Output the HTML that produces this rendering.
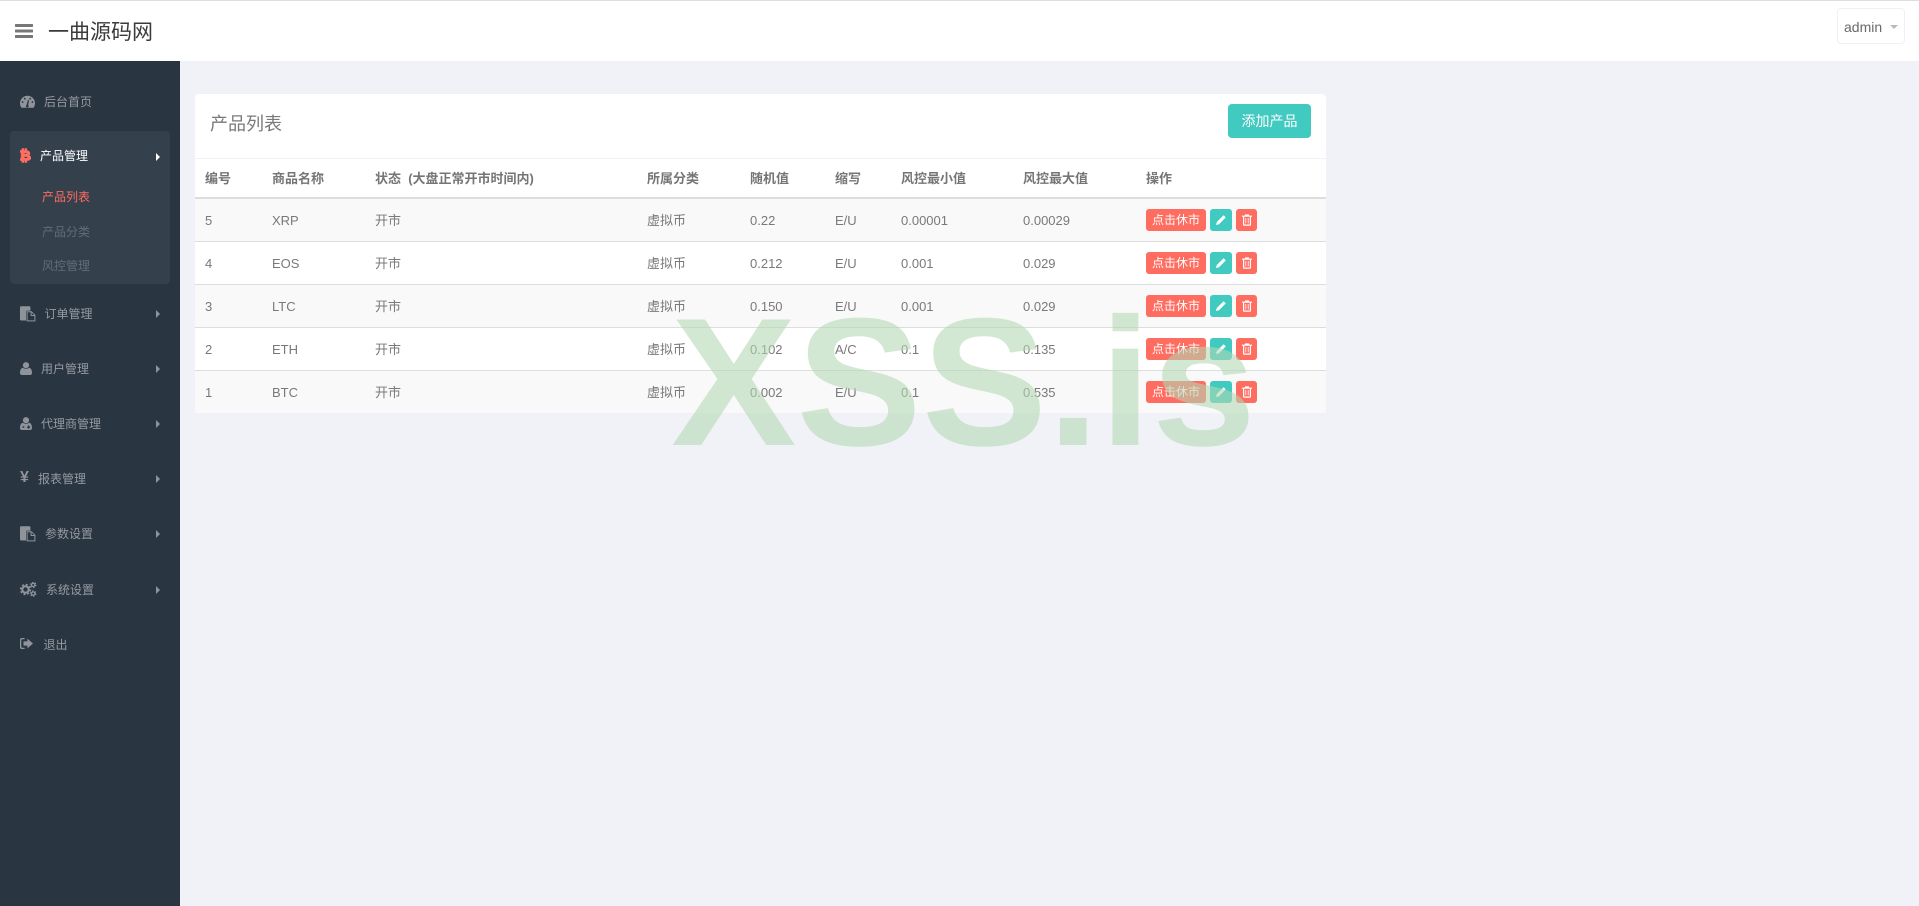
<!DOCTYPE html>
<html lang="zh-CN">
<head>
<meta charset="utf-8">
<title>一曲源码网</title>
<style>
*{box-sizing:border-box}
html,body{margin:0;padding:0;width:1919px;height:906px;overflow:hidden;background:#f1f2f7;font-family:"Liberation Sans","Noto Sans CJK SC",sans-serif;font-size:13px;color:#797979}
.abs{position:absolute}
#top{left:0;top:0;width:1919px;height:61px;background:#fff;border-top:1px solid #ddd}
#brand{position:absolute;left:48px;top:17px;line-height:30px;font-size:21px;color:#3a3a3a}
#admin{position:absolute;left:1837px;top:7px;width:68px;height:36px;border:1px solid #eff0f4;border-radius:4px;font-size:14px;line-height:36px;padding-left:6px;color:#6a6a6a}
#admin i{position:absolute;left:52px;top:16px;width:0;height:0;border:4px solid transparent;border-top-color:#b4bcbc;border-bottom:0}
#side{left:0;top:61px;width:180px;height:845px;background:#2a3542}
#sub{left:10px;top:131px;width:160px;height:153px;background:#35404d;border-radius:4px}
.m{position:absolute;font-size:12px;line-height:20px;color:#969aa1;white-space:nowrap}
.c{position:absolute;left:156px;width:0;height:0;border-left:4px solid #8f949b;border-top:4px solid transparent;border-bottom:4px solid transparent}
.ic{position:absolute;fill:#8f949b}
#card{left:195px;top:94px;width:1131px;height:319px;background:#fff;border-radius:4px 4px 0 0;overflow:hidden}
#card h3{position:absolute;left:15px;top:16px;margin:0;font-size:18px;line-height:28px;font-weight:400;color:#797979}
#add{position:absolute;left:1033px;top:10px;width:83px;height:34px;background:#41cac0;border-radius:4px;color:#fff;font-size:14px;line-height:34px;text-align:center}
table{position:absolute;left:0;top:64px;width:1131px;table-layout:fixed;border-collapse:separate;border-spacing:0}
th,td{padding:0 0 0 10px;text-align:left;font-size:13px;color:#797979;white-space:nowrap;vertical-align:middle}
th{height:41px;padding-bottom:2px;border-top:1px solid #f1f2f7;border-bottom:2px solid #ddd;font-weight:700;color:#757575}
td{height:43px;border-bottom:1px solid #ddd}
td.z{padding-bottom:2px}
tr.s td{background:#f9f9f9}
tr.l td{border-bottom:0;height:42px}
.b{display:inline-block;vertical-align:top;height:22px;border-radius:3px;background:#ff6c60;color:#fff;font-size:12px;line-height:22px;text-align:center;margin-right:4px;position:relative}
.w{width:60px}.e{width:22px;background:#41cac0}.d{width:21px}
.b svg{position:absolute;left:5px;top:5px;width:12px;height:12px;fill:#fff}
</style>
</head>
<body>
<div class="abs" id="top">
  <svg class="abs" style="left:15px;top:23px" width="18" height="14" viewBox="0 0 18 14" fill="#777"><rect y="0" width="18" height="3" rx=".6"/><rect y="5.5" width="18" height="3" rx=".6"/><rect y="11" width="18" height="3" rx=".6"/></svg>
  <div id="brand">一曲源码网</div>
  <div id="admin">admin<i></i></div>
</div>

<div class="abs" id="side"></div>
<div class="abs" id="sub"></div>

<!-- dashboard -->
<svg class="ic" style="left:20px;top:95px" width="15" height="13" viewBox="0 0 15 13"><path fill-rule="evenodd" d="M1.5 12.8A7.5 7.5 0 1 1 13.5 12.8ZM2.6 6.2a.9.9 0 1 0 .01 0ZM4.8 2.8a.9.9 0 1 0 .01 0ZM10.2 2.8a.9.9 0 1 0 .01 0ZM12.4 6.2a.9.9 0 1 0 .01 0ZM6.6 10a1.3 1.3 0 1 0 1.6 .2L9 5 8 4.8Z"/></svg>
<div class="m" style="left:44px;top:92px">后台首页</div>

<!-- bitcoin -->
<svg class="abs" style="left:20px;top:148px" width="11" height="15" viewBox="0 0 11 15"><path fill="#ff6c60" stroke="#ff6c60" stroke-width=".8" fill-rule="evenodd" d="M.4 2.5H2V.6H3.7V2.5H5V.6H6.7V2.6C8.7 2.9 9.8 3.9 9.8 5.3C9.8 6.3 9.2 7 8.4 7.3C9.8 7.7 10.7 8.6 10.7 10C10.7 11.5 9.2 12.4 6.7 12.5V14.4H5V12.5H3.7V14.4H2V12.5H.4V10.8H1.2V4.2H.4ZM4.2 4.8V6.4H5.8C6.7 6.4 7.1 6.1 7.1 5.6C7.1 5.1 6.7 4.8 5.8 4.8ZM4.2 8.5V10.4H6.1C7.2 10.4 7.8 10.1 7.8 9.5C7.8 8.9 7.2 8.5 6.1 8.5Z"/></svg>
<div class="m" style="left:40px;top:146px;color:#fff">产品管理</div>
<div class="c" style="top:153px;border-left-color:#fff"></div>
<div class="m" style="left:42px;top:187px;color:#ff6c60">产品列表</div>
<div class="m" style="left:42px;top:222px;color:#626c79">产品分类</div>
<div class="m" style="left:42px;top:256px;color:#626c79">风控管理</div>

<!-- paste -->
<svg class="ic" style="left:20px;top:306px" width="16" height="16" viewBox="0 0 16 16"><path d="M0 1.5Q0 .3 1.2 .3H9.5Q10.4 .3 10.4 1.5V4.6H7.2Q6 4.6 6 5.8V14.5H1.2Q0 14.5 0 13.3Z"/><path fill-rule="evenodd" d="M6.6 5.2H11.6L15.4 9V15.4H6.6ZM7.6 6.2V14.4H14.4V10H10.6V6.2ZM11.6 6.5V9H14.1Z"/></svg>
<div class="m" style="left:44.5px;top:304px">订单管理</div>
<div class="c" style="top:310px"></div>

<!-- user -->
<svg class="ic" style="left:20px;top:362px" width="12" height="13" viewBox="0 0 12 13"><circle cx="6" cy="3.2" r="3.1"/><path d="M0 11C0 7.8 1.2 6 3 5.8C4.6 7.2 7.4 7.2 9 5.8C10.8 6 12 7.8 12 11C12 12.2 11.2 13 10 13H2C.8 13 0 12.2 0 11Z"/></svg>
<div class="m" style="left:41px;top:359px">用户管理</div>
<div class="c" style="top:365px"></div>

<!-- user-md -->
<svg class="ic" style="left:20px;top:417px" width="12" height="13" viewBox="0 0 12 13"><circle cx="6" cy="3.2" r="3.1"/><path fill-rule="evenodd" d="M0 11C0 7.8 1.2 6 3 5.8C4.6 7.2 7.4 7.2 9 5.8C10.8 6 12 7.8 12 11C12 12.2 11.2 13 10 13H2C.8 13 0 12.2 0 11ZM2.5 9.2H4.3V10.8H2.5ZM8 8.5H9.2V9.5H10.2V10.7H9.2V11.7H8V10.7H7V9.5H8Z"/></svg>
<div class="m" style="left:41px;top:414px">代理商管理</div>
<div class="c" style="top:420px"></div>

<!-- yen -->
<div class="m" style="left:20px;top:468px;font-size:16px;font-weight:700;color:#8f949b">¥</div>
<div class="m" style="left:38px;top:469px">报表管理</div>
<div class="c" style="top:475px"></div>

<!-- paste -->
<svg class="ic" style="left:20px;top:526px" width="16" height="16" viewBox="0 0 16 16"><path d="M0 1.5Q0 .3 1.2 .3H9.5Q10.4 .3 10.4 1.5V4.6H7.2Q6 4.6 6 5.8V14.5H1.2Q0 14.5 0 13.3Z"/><path fill-rule="evenodd" d="M6.6 5.2H11.6L15.4 9V15.4H6.6ZM7.6 6.2V14.4H14.4V10H10.6V6.2ZM11.6 6.5V9H14.1Z"/></svg>
<div class="m" style="left:45px;top:524px">参数设置</div>
<div class="c" style="top:530px"></div>

<!-- gears -->
<svg class="abs" style="left:20px;top:582px" width="17" height="15" viewBox="0 0 17 15" fill="none" stroke="#8f949b"><circle cx="5.5" cy="7.5" r="3.2" stroke-width="2"/><circle cx="5.5" cy="7.5" r="4.9" stroke-width="1.6" stroke-dasharray="2 1.85"/><circle cx="13.2" cy="2.9" r="1.7" stroke-width="1.3"/><circle cx="13.2" cy="2.9" r="2.8" stroke-width="1" stroke-dasharray="1.4 1.53"/><circle cx="13.2" cy="11.6" r="1.7" stroke-width="1.3"/><circle cx="13.2" cy="11.6" r="2.8" stroke-width="1" stroke-dasharray="1.4 1.53"/></svg>
<div class="m" style="left:46px;top:580px">系统设置</div>
<div class="c" style="top:586px"></div>

<!-- sign out -->
<svg class="ic" style="left:20px;top:638px" width="13" height="11" viewBox="0 0 13 11"><path d="M1.8 0H4.6V1.3H2.2Q1.3 1.3 1.3 2.2V8.8Q1.3 9.7 2.2 9.7H4.6V11H1.8Q0 11 0 9.2V1.8Q0 0 1.8 0Z"/><path d="M7.4 .6L13 5.5L7.4 10.4V7.6H3.5V3.4H7.4Z"/></svg>
<div class="m" style="left:43.5px;top:635px">退出</div>

<div class="abs" id="card">
  <h3>产品列表</h3>
  <div id="add">添加产品</div>
  <table>
    <colgroup><col style="width:67px"><col style="width:103px"><col style="width:272px"><col style="width:103px"><col style="width:85px"><col style="width:66px"><col style="width:122px"><col style="width:123px"><col></colgroup>
    <thead><tr><th>编号</th><th>商品名称</th><th>状态&nbsp;&nbsp;(大盘正常开市时间内)</th><th>所属分类</th><th>随机值</th><th>缩写</th><th>风控最小值</th><th>风控最大值</th><th>操作</th></tr></thead>
    <tbody>
      <tr class="s"><td>5</td><td>XRP</td><td class="z">开市</td><td class="z">虚拟币</td><td>0.22</td><td>E/U</td><td>0.00001</td><td>0.00029</td><td><span class="b w">点击休市</span><span class="b e"><svg viewBox="0 0 12 12"><path d="M8.6 1.2L10.8 3.4L4 10.2L1 11L1.8 8Z"/></svg></span><span class="b d"><svg viewBox="0 0 12 12"><path fill-rule="evenodd" d="M4.2 .4H7.8L8.4 1.6H11V2.8H10V10.6Q10 11.7 9 11.7H3Q2 11.7 2 10.6V2.8H1V1.6H3.6ZM3.2 2.8V10.5H8.8V2.8ZM4.4 4H5.2V9.4H4.4ZM6.8 4H7.6V9.4H6.8Z"/></svg></span></td></tr>
      <tr><td>4</td><td>EOS</td><td class="z">开市</td><td class="z">虚拟币</td><td>0.212</td><td>E/U</td><td>0.001</td><td>0.029</td><td><span class="b w">点击休市</span><span class="b e"><svg viewBox="0 0 12 12"><path d="M8.6 1.2L10.8 3.4L4 10.2L1 11L1.8 8Z"/></svg></span><span class="b d"><svg viewBox="0 0 12 12"><path fill-rule="evenodd" d="M4.2 .4H7.8L8.4 1.6H11V2.8H10V10.6Q10 11.7 9 11.7H3Q2 11.7 2 10.6V2.8H1V1.6H3.6ZM3.2 2.8V10.5H8.8V2.8ZM4.4 4H5.2V9.4H4.4ZM6.8 4H7.6V9.4H6.8Z"/></svg></span></td></tr>
      <tr class="s"><td>3</td><td>LTC</td><td class="z">开市</td><td class="z">虚拟币</td><td>0.150</td><td>E/U</td><td>0.001</td><td>0.029</td><td><span class="b w">点击休市</span><span class="b e"><svg viewBox="0 0 12 12"><path d="M8.6 1.2L10.8 3.4L4 10.2L1 11L1.8 8Z"/></svg></span><span class="b d"><svg viewBox="0 0 12 12"><path fill-rule="evenodd" d="M4.2 .4H7.8L8.4 1.6H11V2.8H10V10.6Q10 11.7 9 11.7H3Q2 11.7 2 10.6V2.8H1V1.6H3.6ZM3.2 2.8V10.5H8.8V2.8ZM4.4 4H5.2V9.4H4.4ZM6.8 4H7.6V9.4H6.8Z"/></svg></span></td></tr>
      <tr><td>2</td><td>ETH</td><td class="z">开市</td><td class="z">虚拟币</td><td>0.102</td><td>A/C</td><td>0.1</td><td>0.135</td><td><span class="b w">点击休市</span><span class="b e"><svg viewBox="0 0 12 12"><path d="M8.6 1.2L10.8 3.4L4 10.2L1 11L1.8 8Z"/></svg></span><span class="b d"><svg viewBox="0 0 12 12"><path fill-rule="evenodd" d="M4.2 .4H7.8L8.4 1.6H11V2.8H10V10.6Q10 11.7 9 11.7H3Q2 11.7 2 10.6V2.8H1V1.6H3.6ZM3.2 2.8V10.5H8.8V2.8ZM4.4 4H5.2V9.4H4.4ZM6.8 4H7.6V9.4H6.8Z"/></svg></span></td></tr>
      <tr class="s l"><td>1</td><td>BTC</td><td class="z">开市</td><td class="z">虚拟币</td><td>0.002</td><td>E/U</td><td>0.1</td><td>0.535</td><td><span class="b w">点击休市</span><span class="b e"><svg viewBox="0 0 12 12"><path d="M8.6 1.2L10.8 3.4L4 10.2L1 11L1.8 8Z"/></svg></span><span class="b d"><svg viewBox="0 0 12 12"><path fill-rule="evenodd" d="M4.2 .4H7.8L8.4 1.6H11V2.8H10V10.6Q10 11.7 9 11.7H3Q2 11.7 2 10.6V2.8H1V1.6H3.6ZM3.2 2.8V10.5H8.8V2.8ZM4.4 4H5.2V9.4H4.4ZM6.8 4H7.6V9.4H6.8Z"/></svg></span></td></tr>
    </tbody>
  </table>
</div>

<svg class="abs" style="left:0;top:0;pointer-events:none" width="1919" height="906"><text transform="translate(671 445) scale(1 .97)" font-family="Liberation Sans" font-weight="700" font-size="188" fill="#b2d8b4" fill-opacity=".58">XSS.is</text></svg>
</body>
</html>
